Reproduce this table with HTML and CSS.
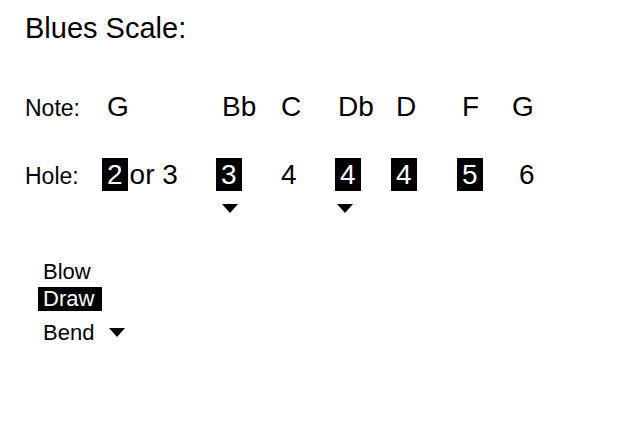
FILE: index.html
```html
<!DOCTYPE html>
<html lang="en">
<head>
<meta charset="utf-8">
<title>Blues Scale</title>
<link rel="stylesheet" href="styles.css">
</head>
<body>
<div class="page">
  <h1 class="title">Blues Scale:</h1>

  <div class="scale">
    <div class="label r1">Note:</div>
    <div class="note r1 p5">G</div>
    <div class="note r1 p6">Bb</div>
    <div class="note r1">C</div>
    <div class="note r1 p3">Db</div>
    <div class="note r1 p5">D</div>
    <div class="note r1 p5">F</div>
    <div class="note r1 p1">G</div>

    <div class="label r2">Hole:</div>
    <div class="hole r2"><span class="box gap">2</span>or 3</div>
    <div class="hole r2"><span class="box">3</span></div>
    <div class="hole r2">4</div>
    <div class="hole r2"><span class="box">4</span></div>
    <div class="hole r2"><span class="box">4</span></div>
    <div class="hole r2"><span class="box">5</span></div>
    <div class="hole r2 p8">6</div>

    <div class="mark r3 c3"><span class="tri"></span></div>
    <div class="mark r3 c5 m2"><span class="tri"></span></div>
  </div>

  <div class="legend">
    <div class="leg">Blow</div>
    <div class="leg draw"><span class="drawbox">Draw</span></div>
    <div class="leg bend">Bend <span class="tri small"></span></div>
  </div>
</div>
</body>
</html>
```
FILE: styles.css
```css
html, body {
  margin: 0;
  padding: 0;
  background: #fff;
}
body {
  font-family: "Liberation Sans", Arial, Helvetica, sans-serif;
  color: #000;
}
.page {
  padding: 12px 0 0 25px;
}
.title {
  margin: 0;
  font-size: 29px;
  font-weight: normal;
  line-height: 32px;
}
.scale {
  margin-top: 47px;
  display: grid;
  grid-template-columns: 77px 114px 65px 54px 56px 66px 54px auto;
  align-items: baseline;
}
.label {
  font-size: 23px;
  line-height: 32px;
}
.note, .hole {
  font-size: 28px;
  line-height: 32px;
}
.r2 { margin-top: 34px; }
.box {
  display: inline-block;
  background: #000;
  color: #fff;
  line-height: 33px;
  padding: 0 5px;
}
.box.gap { margin-right: 2px; }
.p1 { padding-left: 1px; }
.p3 { padding-left: 3px; }
.p5 { padding-left: 5px; }
.p6 { padding-left: 6px; }
.p8 { padding-left: 8px; }
.mark {
  margin-top: 12px;
  height: 9px;
  align-self: start;
}
.c3 { grid-column: 3; padding-left: 6px; }
.c5 { grid-column: 5; }
.m2 { padding-left: 2px; }
.tri {
  display: inline-block;
  width: 0;
  height: 0;
  border-left: 8.5px solid transparent;
  border-right: 8.5px solid transparent;
  border-top: 9px solid #000;
  vertical-align: top;
}
.legend {
  margin-top: 47px;
  margin-left: 13px;
  display: flex;
  flex-direction: column;
  align-items: flex-start;
}
.leg {
  font-size: 22px;
  line-height: 24px;
  padding-left: 5px;
}
.draw {
  margin-top: 3px;
  padding-left: 0;
}
.drawbox {
  display: inline-block;
  background: #000;
  color: #fff;
  padding: 0 8px 0 5px;
}
.bend {
  margin-top: 10px;
  display: flex;
  align-items: flex-start;
  gap: 15px;
}
.tri.small {
  border-left-width: 8px;
  border-right-width: 8px;
  margin-top: 7px;
}
```
